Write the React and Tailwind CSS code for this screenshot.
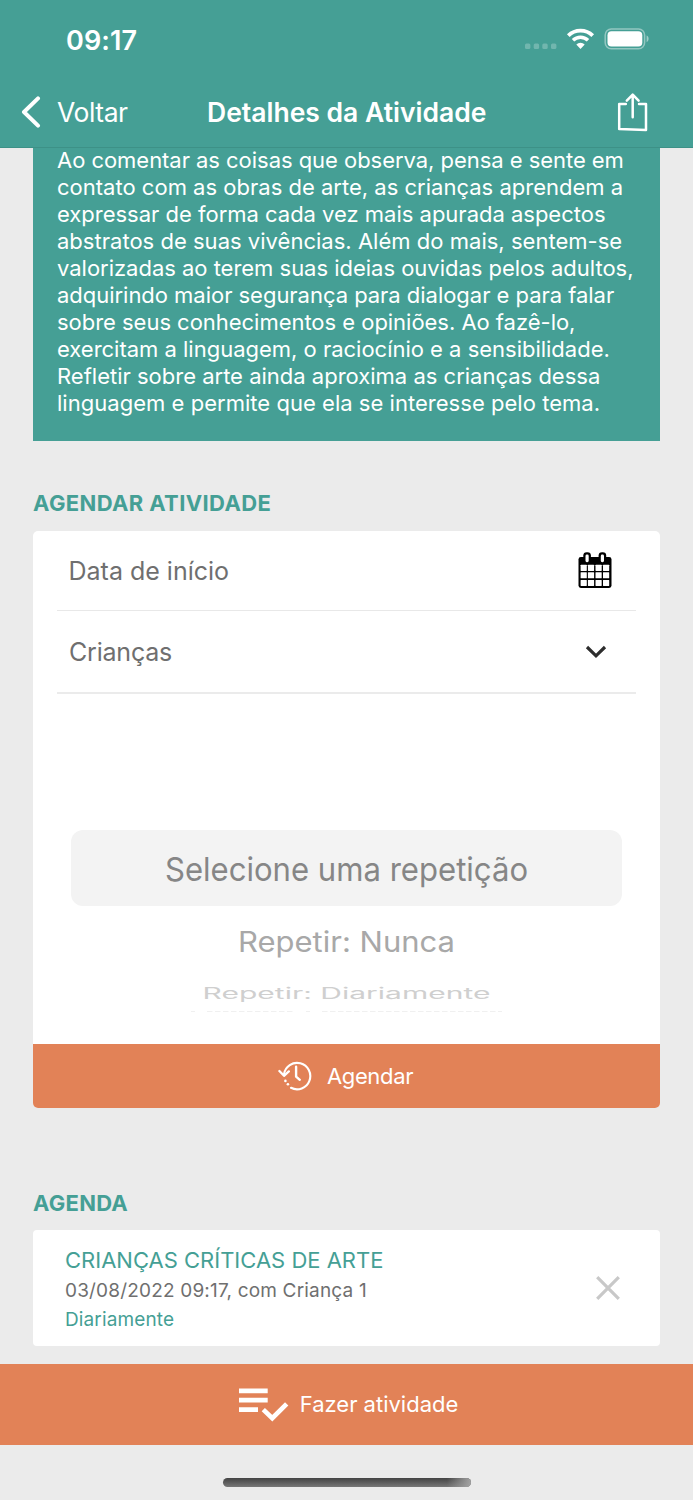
import { Fragment } from "react";

const paragraph = [
  ["Ao comentar as coisas que observa, pensa e sente em", "tracking-[-0.04px]"],
  ["contato com as obras de arte, as crianças aprendem a", "tracking-[0.01px]"],
  ["expressar de forma cada vez mais apurada aspectos", "tracking-[-0.01px]"],
  ["abstratos de suas vivências. Além do mais, sentem-se", "tracking-[0.02px]"],
  ["valorizadas ao terem suas ideias ouvidas pelos adultos,", "tracking-[-0.02px]"],
  ["adquirindo maior segurança para dialogar e para falar", "tracking-[-0.03px]"],
  ["sobre seus conhecimentos e opiniões. Ao fazê-lo,", "tracking-[-0.03px]"],
  ["exercitam a linguagem, o raciocínio e a sensibilidade.", "tracking-[-0.01px]"],
  ["Refletir sobre arte ainda aproxima as crianças dessa", "tracking-[0px]"],
  ["linguagem e permite que ela se interesse pelo tema.", "tracking-[0.03px]"],
];

function StatusIcons() {
  return (
    <svg className="h-[24px] w-[126px]" viewBox="0 0 126 24" fill="none">
      <g fill="#fff" fillOpacity="0.24">
        <rect x="0" y="15.6" width="5.4" height="5.4" rx="1.5" />
        <rect x="8.7" y="15.6" width="5.4" height="5.4" rx="1.5" />
        <rect x="17.3" y="15.6" width="5.4" height="5.4" rx="1.5" />
        <rect x="26" y="15.6" width="5.4" height="5.4" rx="1.5" />
      </g>
      <path d="M43.3 7.6A17.4 17.4 0 0 1 67.7 7.6" stroke="#fff" strokeWidth="3.8" />
      <path d="M48 12.2A10.8 10.8 0 0 1 63 12.2" stroke="#fff" strokeWidth="3.5" />
      <path d="M51.3 16.5A6 6 0 0 1 59.7 16.5L55.5 21Z" fill="#fff" />
      <rect x="80.2" y="1" width="39.4" height="19.7" rx="6" stroke="#fff" strokeOpacity="0.42" strokeWidth="1.5" />
      <rect x="82.5" y="3.3" width="34.8" height="15.1" rx="4" fill="#fff" />
      <path d="M121.6 7.6C124.3 8.7 124.3 13.1 121.6 14.2Z" fill="#fff" fillOpacity="0.48" />
    </svg>
  );
}

function ShareIcon() {
  return (
    <svg className="h-[40px] w-[34px]" viewBox="0 0 34 40" fill="none" stroke="#fff" strokeWidth="2.5" strokeLinejoin="round" strokeLinecap="round">
      <path d="M9.8 12H3.2V37L30 38V12H23" />
      <path d="M16.7 25.3V3M10.8 8.6L16.7 2.6L22.6 8.6" />
    </svg>
  );
}

function CalendarIcon() {
  const cols = [2.6, 9.9, 17.5, 25];
  const rows = [12.8, 20.2, 27.9];
  return (
    <svg className="h-[37px] w-[34px]" viewBox="0 0 34 37">
      <rect x="0.5" y="5" width="33" height="31" rx="2.4" fill="#000" />
      <rect x="5.3" y="0.2" width="7.6" height="11" rx="3.4" fill="#000" />
      <rect x="20.6" y="0.2" width="7.6" height="11" rx="3.4" fill="#000" />
      <rect x="7.5" y="2.6" width="3.2" height="7.6" rx="1.4" fill="#fff" />
      <rect x="22.8" y="2.6" width="3.2" height="7.6" rx="1.4" fill="#fff" />
      {rows.map((y) => (
        <Fragment key={y}>
          {cols.map((x) => (
            <rect key={x} x={x} y={y} width="6.2" height="6.1" rx="0.4" fill="#fff" />
          ))}
        </Fragment>
      ))}
    </svg>
  );
}

function HistoryIcon() {
  return (
    <svg className="h-[30px] w-[34px]" viewBox="0 0 34 30" fill="none" stroke="#fff" strokeLinecap="round" strokeLinejoin="round">
      <path d="M6 13.2A13.2 13.2 0 1 1 13 26.8" strokeWidth="2.1" />
      <path d="M1.4 10L6 14.8L10.8 10.4" strokeWidth="2.3" />
      <path d="M18.1 5.8V15.6L21.8 18.8" strokeWidth="2.4" />
      <g fill="#fff" stroke="none">
        <circle cx="7.4" cy="19.9" r="1.3" />
        <circle cx="9.9" cy="23.3" r="1.3" />
      </g>
    </svg>
  );
}

function ChecklistIcon() {
  return (
    <svg className="h-[34px] w-[50px]" viewBox="0 0 50 34">
      <path d="M0 0.5H28.7V5.3H0ZM0 9.8H28.7V14.5H0ZM0 19.2H19V23.9H0Z" fill="#fff" />
      <path d="M24.3 21.6L33.3 30.2L47.7 15.8" fill="none" stroke="#fff" strokeWidth="4.7" />
    </svg>
  );
}

export default function App() {
  return (
    <div className="flex h-[1500px] w-[693px] flex-col overflow-hidden bg-[#ebebeb] font-['Inter','Liberation_Sans',sans-serif] text-[#6f6f6f]">
      <header className="flex h-[148px] shrink-0 flex-col border-b border-[#3d9187] bg-[#459f95] text-white">
        <div className="flex h-[76px] items-center justify-between pt-[5px] pr-[42px] pl-[66px]">
          <span className="pt-px text-[27px] leading-[32px] font-semibold tracking-[0.1px]">09:17</span>
          <StatusIcons />
        </div>
        <div className="grid h-[72px] grid-cols-[207px_1fr_77px] items-center pt-[2px]">
          <div className="flex items-center pl-[21px]">
            <svg className="h-[32px] w-[20px]" viewBox="0 0 20 32" fill="none">
              <path d="M17 2.4L3 16L17 29.6" stroke="#fff" strokeWidth="4" strokeLinecap="round" strokeLinejoin="round" />
            </svg>
            <span className="pt-[2px] pl-[16px] text-[26.5px] tracking-[-0.45px]">Voltar</span>
          </div>
          <h1 className="pt-[2px] text-[26.5px] font-semibold whitespace-nowrap">Detalhes da Atividade</h1>
          <ShareIcon />
        </div>
      </header>

      <main className="flex flex-1 flex-col px-[33px]">
        <section className="h-[293px] w-[627px] bg-[#459f95] pl-[24px] text-[22px] leading-[27px] text-white">
          <p className="-mt-[1px]">
            {paragraph.map(([line, tracking]) => (
              <span key={line} className={`block whitespace-nowrap ${tracking}`}>{line}</span>
            ))}
          </p>
        </section>

        <h2 className="mt-[48px] text-[22px] leading-[29px] font-bold tracking-[0.38px] text-[#459f95]">AGENDAR ATIVIDADE</h2>

        <section className="mt-[12.5px] flex h-[577.5px] w-[627px] flex-col overflow-hidden rounded-[5px] bg-white">
          <div className="mx-[24px] flex h-[80.5px] items-center justify-between border-b-[1.5px] border-[#e8e8e8] pr-[24.5px] pl-[11.5px] text-[25px]">
            <span className="pt-[2px]">Data de início</span>
            <CalendarIcon />
          </div>
          <div className="mx-[24px] flex h-[82.5px] items-center justify-between border-b-2 border-[#ebebeb] pt-[2px] pr-[29px] pl-[12px] text-[25px]">
            <span className="tracking-[-0.2px]">Crianças</span>
            <svg className="h-[14px] w-[22px]" viewBox="0 0 22 14" fill="none">
              <path d="M2 2L11 10.8L20 2" stroke="#2d2d2d" strokeWidth="3.2" />
            </svg>
          </div>
          <div className="flex flex-1 flex-col items-center pt-[136.5px]">
            <div className="flex h-[76px] w-[551px] items-center justify-center rounded-[12px] bg-[#f3f3f3] text-[31.1px] text-[#868686]">
              <span className="scale-y-[1.06] pt-[2px] whitespace-nowrap">Selecione uma repetição</span>
            </div>
            <div className="mt-[16px] scale-y-[0.9] text-[31px] leading-[40px] text-[#a8a8a8]">Repetir: Nunca</div>
            <div className="mt-[10.5px] scale-y-[0.51] text-[30px] leading-[40px] text-[#cfcfcf]">Repetir: Diariamente</div>
            <div className="-mt-[2px] flex h-px w-[311px] justify-between">
              <span className="w-[4px] bg-[#f0f0f0]" />
              <span className="w-[88px] bg-[repeating-linear-gradient(90deg,#f0f0f0_0_5px,#ffffff_6px_8px)]" />
              <span className="w-[4px] bg-[#f0f0f0]" />
              <span className="w-[180px] bg-[repeating-linear-gradient(90deg,#f0f0f0_0_5px,#ffffff_6px_8px)]" />
            </div>
          </div>
          <button className="flex h-[64px] shrink-0 items-center justify-center bg-[#e28257] pr-[2px] text-[22px] tracking-[-0.35px] text-white">
            <HistoryIcon />
            <span className="pl-[15px]">Agendar</span>
          </button>
        </section>

        <h2 className="mt-[80px] text-[22px] leading-[30px] font-bold tracking-[0.25px] text-[#459f95]">AGENDA</h2>

        <section className="mt-[12px] flex h-[116px] w-[627px] items-center justify-between rounded-[4px] bg-white pr-[40px] pl-[32px]">
          <div className="flex flex-col">
            <span className="text-[22px] leading-[32px] text-[#459f95]">CRIANÇAS CRÍTICAS DE ARTE</span>
            <span className="text-[19px] leading-[30px] tracking-[0.18px]">03/08/2022 09:17, com Criança 1</span>
            <span className="text-[19px] leading-[27px] tracking-[0.13px] text-[#459f95]">Diariamente</span>
          </div>
          <svg className="h-[24px] w-[24px]" viewBox="0 0 24 24">
            <path d="M1.2 1.2L22.8 22.8M22.8 1.2L1.2 22.8" stroke="#c8c8c8" strokeWidth="3.2" />
          </svg>
        </section>
      </main>

      <button className="flex h-[81px] shrink-0 items-center justify-center bg-[#e28257] pt-px pl-[4px] text-[22px] text-white">
        <ChecklistIcon />
        <span className="pb-px pl-[11px]">Fazer atividade</span>
      </button>
      <footer className="flex h-[55px] shrink-0 justify-center pt-[33px]">
        <div className="h-[9px] w-[248px] overflow-hidden rounded-full bg-linear-to-b from-[#444444] to-[#777777]">
          <div className="ml-auto h-full w-[24px] bg-linear-to-r from-transparent to-[#a3a3a3]" />
        </div>
      </footer>
    </div>
  );
}
